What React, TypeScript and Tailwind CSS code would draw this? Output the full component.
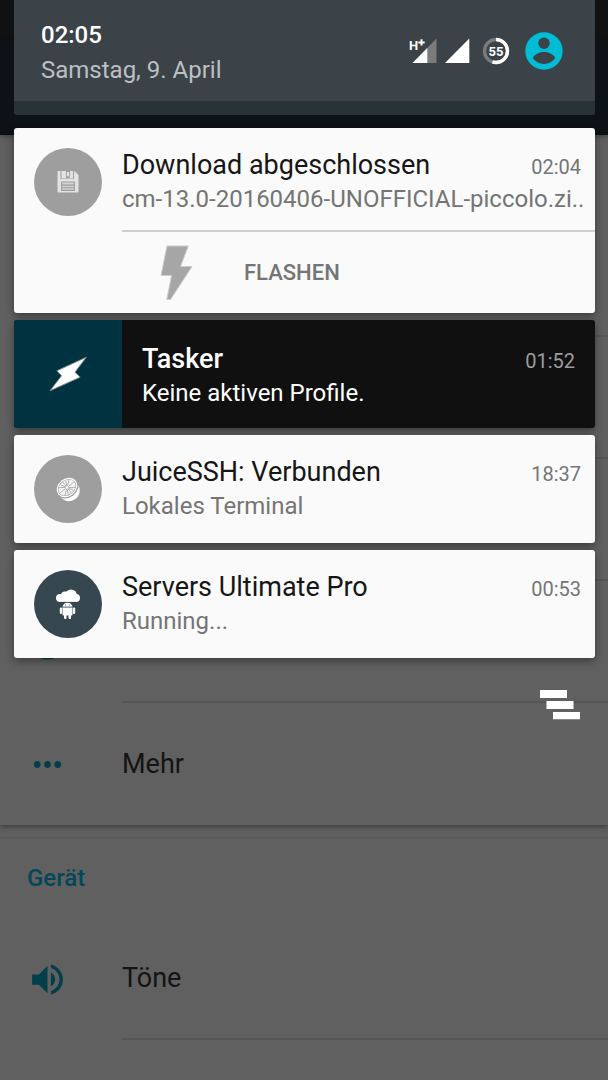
import type { ReactNode } from "react";

/* ---------- Status bar icons ---------- */

function MobileDataIcon() {
  return (
    <svg width="28" height="26" viewBox="0 0 28 26" aria-label="H+">
      <path d="M27.500 0.500V25H3.500Z" fill="#7b7b7b" />
      <path d="M18.300 10V25H3.500Z" fill="#ffffff" />
      <path d="M0 0h16v7.500L8.500 12.500H0Z" fill="#3b4248" />
      <text x="0" y="12" fontSize="13" fontWeight="700" fill="#ffffff">
        H
      </text>
      <path d="M11.500 1.200h2v2.200h2.200v2h-2.200v2.200h-2V5.400H9.300v-2h2.200Z" fill="#ffffff" />
    </svg>
  );
}

function SignalIcon() {
  return (
    <svg width="25" height="26" viewBox="0 0 25 26" aria-hidden="true">
      <path d="M24.300 0.500V25H0Z" fill="#ffffff" />
    </svg>
  );
}

function BatteryIcon() {
  return (
    <svg width="28" height="28" viewBox="0 0 28 28" aria-label="55 %">
      <circle cx="14" cy="14" r="11.500" fill="none" stroke="#7b7b7b" strokeWidth="3.400" />
      <circle
        cx="14"
        cy="14"
        r="11.500"
        fill="none"
        stroke="#ffffff"
        strokeWidth="3.400"
        pathLength="100"
        strokeDasharray="55 45"
        transform="rotate(-90 14 14)"
      />
      <text x="14" y="18.800" textAnchor="middle" fontSize="13" fontWeight="700" fill="#ffffff">
        55
      </text>
    </svg>
  );
}

function AvatarIcon() {
  return (
    <svg width="38" height="38" viewBox="0 0 38 38" aria-hidden="true">
      <circle cx="19" cy="19" r="18.700" fill="#00bcd4" />
      <circle cx="19" cy="11.300" r="5.700" fill="#3b4248" />
      <path d="M7.800 25.800C9.800 22 15 20 19 20s9.200 2 11.200 5.800C27.700 29.800 23.500 32 19 32S10.300 29.800 7.800 25.800Z" fill="#3b4248" />
    </svg>
  );
}

/* ---------- Notification icons ---------- */

function SaveIcon() {
  return (
    <svg width="22" height="24" viewBox="0 0 22 24" aria-hidden="true">
      <path d="M1.500 1h16l4 4v16.500a1 1 0 0 1-1 1h-19a1 1 0 0 1-1-1V2a1 1 0 0 1 1-1Z" fill="#e2e2e2" />
      <path d="M3.500 0.500h13.500V9H3.500Z" fill="#9e9e9e" />
      <path d="M4.500 1h4.500v7h3.500V1H16v7.500H4.500Z" fill="#e2e2e2" />
      <path d="M9 1h4v6H9Z" fill="#9e9e9e" />
      <path d="M9.800 2h2.400v4.300H9.800Z" fill="#e2e2e2" />
      <path d="M4 11.500h14v9.500H4Z" fill="#9e9e9e" />
      <path d="M5 12.500h12v2H5ZM5 15.700h12v1.500H5ZM5 18.300h12v1.500H5Z" fill="#d2d2d2" />
    </svg>
  );
}

function FlashIcon() {
  return (
    <svg width="34" height="56" viewBox="0 0 34 56" aria-hidden="true">
      <path
        d="M7 1H28.300L20.500 21.500H32L10.500 54.500H6.800L11.500 30.500H1Z"
        fill="#a6a6a6"
        stroke="#cccccc"
        strokeWidth="1"
      />
    </svg>
  );
}

function TaskerIcon() {
  return (
    <svg width="40" height="38" viewBox="0 0 40 38" aria-hidden="true">
      <path
        d="M38.300 2.200 8.800 15.800l4.700 5L2 35.800 32.200 22.200l-5.200-5Z"
        fill="#ffffff"
        stroke="#7b8589"
        strokeWidth="1"
        strokeLinejoin="round"
      />
    </svg>
  );
}

function CitrusIcon() {
  return (
    <svg width="26" height="26" viewBox="0 0 26 26" aria-hidden="true">
      <circle cx="14" cy="14.500" r="10.700" fill="#ffffff" />
      <g transform="rotate(-38 12 11.500)">
        <ellipse cx="12" cy="12" rx="12" ry="9.600" fill="#9e9e9e" />
        <ellipse cx="12" cy="11.500" rx="11" ry="8.800" fill="#ffffff" />
        <ellipse cx="12" cy="11.500" rx="9.900" ry="7.700" fill="#9e9e9e" />
        <ellipse cx="12" cy="11.500" rx="9.300" ry="7.100" fill="#f4f4f4" />
        <path
          d="M12 4.500v14M3 11.500h18M5.500 6.500l13 10M18.500 6.500l-13 10M8.500 5l7 13M15.500 5l-7 13"
          stroke="#9e9e9e"
          strokeWidth="0.700"
        />
        <circle cx="12" cy="11.500" r="1.300" fill="#ffffff" />
      </g>
    </svg>
  );
}

function CloudRobotIcon() {
  return (
    <svg width="24" height="30" viewBox="0 0 24 30" aria-hidden="true">
      <g fill="#ffffff">
        <circle cx="4" cy="9" r="4" />
        <circle cx="9" cy="6.500" r="4" />
        <circle cx="15" cy="6.500" r="6" />
        <circle cx="20" cy="9" r="4" />
        <rect x="4" y="7" width="16" height="6" />
        <path d="M6.500 17.800c.4-2.600 2.700-4.200 5-4.200s4.600 1.600 5 4.200Z" />
        <path d="M6.500 18.500h10v7a1 1 0 0 1-1 1h-8a1 1 0 0 1-1-1Z" />
        <rect x="3.800" y="18.500" width="2.200" height="6.500" rx="1" />
        <rect x="17" y="18.500" width="2.200" height="6.500" rx="1" />
        <rect x="8" y="25" width="2.500" height="5" rx="1" />
        <rect x="12.500" y="25" width="2.500" height="5" rx="1" />
      </g>
      <path d="M4 13.300h16" stroke="#37474f" strokeWidth="0.600" />
      <path d="M6.500 18.100h10" stroke="#8b979c" strokeWidth="0.800" />
      <circle cx="9.500" cy="16" r="0.500" fill="#37474f" />
      <circle cx="13.500" cy="16" r="0.500" fill="#37474f" />
    </svg>
  );
}

function ClearAllIcon() {
  return (
    <svg width="40" height="30" viewBox="0 0 40 30" aria-hidden="true">
      <path d="M0 0h27v8H0ZM6.500 11h27v8h-27ZM13 22h27v7.300H13Z" fill="#ffffff" />
    </svg>
  );
}

/* ---------- Settings icons ---------- */

function SettingsIcon({ path }: { path: string }) {
  return (
    <svg width="41" height="41" viewBox="0 0 24 24" fill="#033e4b" aria-hidden="true">
      <path d={path} />
    </svg>
  );
}

const DATA_USAGE =
  "M13 2.050v3.030c3.390.49 6 3.390 6 6.920 0 .9-.18 1.750-.48 2.540l2.600 1.530c.56-1.240.88-2.620.88-4.070 0-5.180-3.950-9.450-9-9.950zM12 19c-3.870 0-7-3.130-7-7 0-3.530 2.610-6.430 6-6.920V2.050c-5.060.5-9 4.760-9 9.950 0 5.520 4.470 10 9.990 10 3.310 0 6.240-1.610 8.060-4.090l-2.600-1.530C16.170 17.980 14.210 19 12 19z";
const MORE =
  "M6 10c-1.100 0-2 .9-2 2s.9 2 2 2 2-.9 2-2-.9-2-2-2zm12 0c-1.100 0-2 .9-2 2s.9 2 2 2 2-.9 2-2-.9-2-2-2zm-6 0c-1.100 0-2 .9-2 2s.9 2 2 2 2-.9 2-2-.9-2-2-2z";
const VOLUME =
  "M3 9v6h4l5 5V4L7 9H3zm13.500 3c0-1.770-1.020-3.290-2.500-4.030v8.050c1.480-.73 2.500-2.250 2.500-4.020zM14 3.230v2.060c2.890.86 5 3.540 5 6.710s-2.110 5.850-5 6.710v2.060c4.010-.91 7-4.490 7-8.770s-2.990-7.860-7-8.770z";

/* ---------- Settings page behind the shade ---------- */

function SettingsRow({ path, label, last = false }: { path?: string; label?: string; last?: boolean }) {
  return (
    <li className="flex h-[122px] items-stretch">
      <span className="flex w-[122px] shrink-0 items-center pl-[27px]">
        {path && <SettingsIcon path={path} />}
      </span>
      <span
        className={
          last
            ? "flex flex-1 items-center text-[27px] text-[#141414]"
            : "flex flex-1 items-center border-b-2 border-[#555555] text-[27px] text-[#141414]"
        }
      >
        {label}
      </span>
    </li>
  );
}

function SettingsPage() {
  return (
    <main>
      <div className="h-10 bg-[#101110]" />
      <div className="h-[95px] bg-[#0c1215] shadow-[0_2px_5px_rgba(0,0,0,0.3)]" />
      <section className="pt-20 shadow-[0_2px_5px_rgba(0,0,0,0.35)]">
        <ul>
          <SettingsRow />
          <SettingsRow />
          <SettingsRow />
          <SettingsRow path={DATA_USAGE} />
          <SettingsRow path={MORE} label="Mehr" last />
        </ul>
      </section>
      <section className="mt-3 border-t border-[#5a5a5a]">
        <h2 className="flex h-20 items-center pl-[27px] text-2xl font-medium text-[#03485a]">Gerät</h2>
        <ul>
          <SettingsRow path={VOLUME} label="Töne" />
        </ul>
      </section>
    </main>
  );
}

/* ---------- Notification shade ---------- */

const CARD = "overflow-hidden rounded-[3px] shadow-[0_3px_9px_rgba(0,0,0,0.4)]";

type NotificationProps = {
  icon: ReactNode;
  circle: string;
  title: string;
  text: string;
  time: string;
  children?: ReactNode;
};

function Notification({ icon, circle, title, text, time, children }: NotificationProps) {
  return (
    <li className={`${CARD} bg-[#fafafa]`}>
      <div className="flex">
        <div className="flex w-[108px] shrink-0 justify-center pt-5">
          <span className={`flex size-[68px] items-center justify-center rounded-full ${circle}`}>{icon}</span>
        </div>
        <div className="min-w-0 flex-1 pt-5 pr-[14px] pb-5">
          <div className="flex items-baseline justify-between leading-[34px]">
            <h3 className="text-[27px] text-[#161616]">{title}</h3>
            <time className="text-xl leading-6 text-[#757575]">{time}</time>
          </div>
          <p className="text-2xl leading-[34px] whitespace-nowrap text-[#757575]">{text}</p>
        </div>
      </div>
      {children}
    </li>
  );
}

function TaskerNotification() {
  return (
    <li className={`${CARD} flex h-[108px] bg-[#101010]`}>
      <div className="flex w-[108px] shrink-0 items-center justify-center bg-[#00323f]">
        <TaskerIcon />
      </div>
      <div className="min-w-0 flex-1 px-5 pt-[22px]">
        <div className="flex items-baseline justify-between leading-[34px]">
          <h3 className="text-[27px] font-medium text-white">Tasker</h3>
          <time className="text-xl leading-6 text-[#9c9c9c]">01:52</time>
        </div>
        <p className="text-2xl leading-[34px] text-white">Keine aktiven Profile.</p>
      </div>
    </li>
  );
}

function ShadeHeader() {
  return (
    <header className="overflow-hidden rounded-b-[3px] bg-linear-to-b from-[#222c31] to-[#28343a] pb-[14px]">
      <div className="flex h-[101px] items-start justify-between bg-[#3b4248] pr-8 pl-[27px]">
        <div className="pt-[18px]">
          <p className="text-2xl leading-[35px] font-medium text-white">02:05</p>
          <p className="text-2xl leading-[35px] text-[#bdc0c2]">Samstag, 9. April</p>
        </div>
        <div className="flex h-[101px] items-center">
          <MobileDataIcon />
          <span className="ml-2 flex">
            <SignalIcon />
          </span>
          <span className="ml-3 flex">
            <BatteryIcon />
          </span>
          <button type="button" aria-label="Profil" className="ml-[15px]">
            <AvatarIcon />
          </button>
        </div>
      </div>
    </header>
  );
}

export default function App() {
  return (
    <div className="relative min-h-screen overflow-hidden bg-[#606060] font-[Roboto,sans-serif]">
      <SettingsPage />

      <div className="absolute inset-x-0 top-0 pr-[13px] pl-[14px]">
        <ShadeHeader />
        <ul className="mt-[13px] flex flex-col gap-[7px]">
          <Notification
            icon={<SaveIcon />}
            circle="bg-[#9e9e9e]"
            title="Download abgeschlossen"
            text="cm-13.0-20160406-UNOFFICIAL-piccolo.zi.."
            time="02:04"
          >
            <div className="-mt-1.5 ml-[108px] border-t-2 border-[#cfcfcf]">
              <button
                type="button"
                className="flex h-[81px] w-full items-center pl-[38px] text-[22px] font-medium text-[#757575]"
              >
                <FlashIcon />
                <span className="ml-[50px]">FLASHEN</span>
              </button>
            </div>
          </Notification>
          <TaskerNotification />
          <Notification
            icon={<CitrusIcon />}
            circle="bg-[#9e9e9e]"
            title="JuiceSSH: Verbunden"
            text="Lokales Terminal"
            time="18:37"
          />
          <Notification
            icon={<CloudRobotIcon />}
            circle="bg-[#37474f]"
            title="Servers Ultimate Pro"
            text="Running..."
            time="00:53"
          />
        </ul>
        <div className="mt-8 flex justify-end pr-[15px]">
          <button type="button" aria-label="Alle löschen">
            <ClearAllIcon />
          </button>
        </div>
      </div>
    </div>
  );
}
